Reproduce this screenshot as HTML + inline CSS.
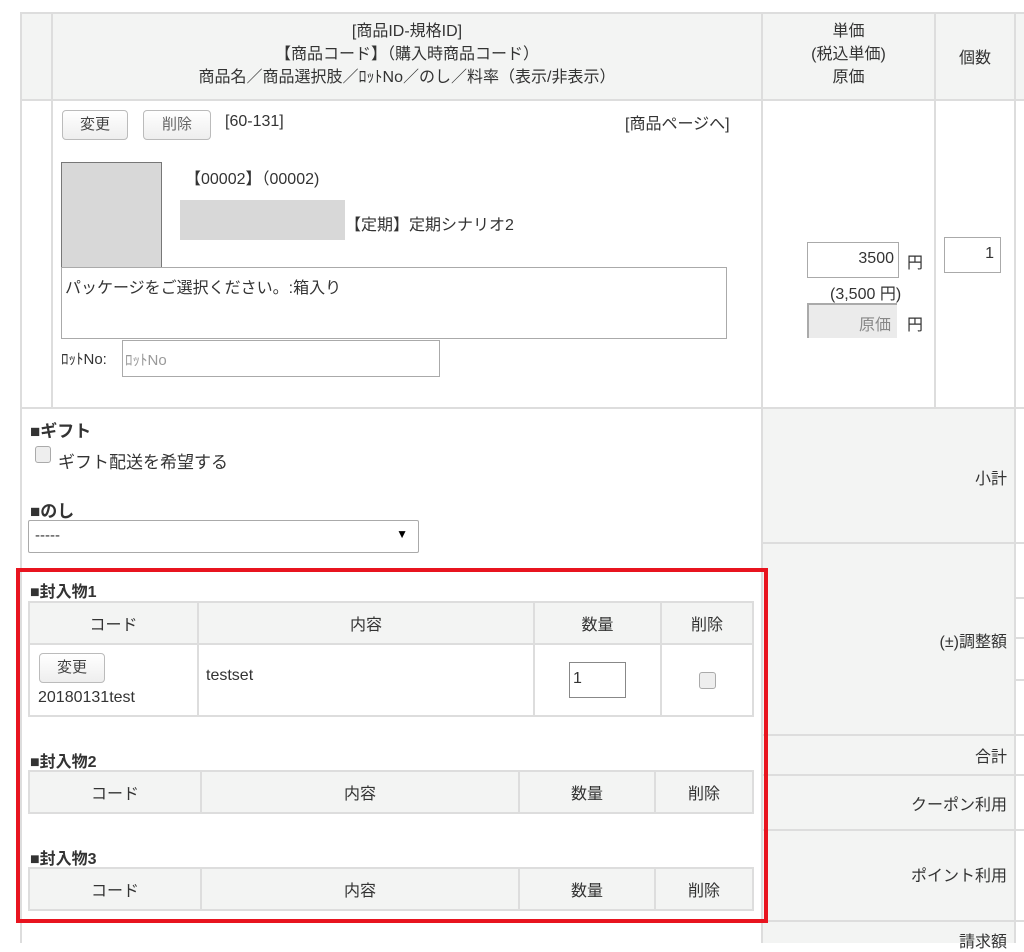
<!DOCTYPE html>
<html><head><meta charset="utf-8"><style>
*{box-sizing:border-box;margin:0;padding:0}
body{width:1024px;height:943px;background:#fff;position:relative;overflow:hidden;font-family:"Liberation Sans","Noto Sans CJK JP",sans-serif;font-size:16px;color:#333}
.a{position:absolute}
.hl{position:absolute;height:2px;background:#ddd}
.vl{position:absolute;width:2px;background:#ddd}
.g{background:#f3f4f3}
.btn{position:absolute;border:1px solid #bbb;border-radius:4px;background:linear-gradient(#fff,#eee);font-size:15px;text-align:center;color:#444}
.inp{position:absolute;border:1px solid #aaa;background:#fff}
.sub{position:absolute;border-collapse:collapse;font-size:16px}
.sub td{border:2px solid #ddd;text-align:center}
.sub tr.h td{background:#f3f4f3;height:42px}
</style></head><body>
<div class="a g" style="left:20px;top:13px;width:1004px;height:88px"></div>
<div class="hl" style="left:20px;top:12px;width:1004px"></div>
<div class="hl" style="left:20px;top:99px;width:1004px"></div>
<div class="hl" style="left:20px;top:407px;width:1004px"></div>
<div class="vl" style="left:20px;top:12px;height:931px"></div>
<div class="vl" style="left:51px;top:12px;height:396px"></div>
<div class="vl" style="left:761px;top:12px;height:931px"></div>
<div class="vl" style="left:934px;top:12px;height:396px"></div>
<div class="vl" style="left:1014px;top:12px;height:931px"></div>
<div class="a" style="left:52px;top:20px;width:710px;text-align:center;line-height:23px">[商品ID-規格ID]<br>【商品コード】（購入時商品コード）<br>商品名／商品選択肢／ﾛｯﾄNo／のし／料率（表示/非表示）</div>
<div class="a" style="left:762px;top:20px;width:173px;text-align:center;line-height:23px">単価<br>(税込単価)<br>原価</div>
<div class="a" style="left:935px;top:44px;width:80px;text-align:center">個数</div>
<div class="btn" style="left:62px;top:110px;width:66px;height:30px;line-height:28px">変更</div>
<div class="btn" style="left:143px;top:110px;width:68px;height:30px;line-height:28px;color:#666">削除</div>
<div class="a" style="left:225px;top:113px">[60-131]</div>
<div class="a" style="left:625px;top:110px">[商品ページへ]</div>
<div class="a" style="left:61px;top:162px;width:101px;height:106px;background:#d8d8d8;border:1px solid #777"></div>
<div class="a" style="left:185px;top:165px">【00002】（00002)</div>
<div class="a" style="left:180px;top:200px;width:165px;height:40px;background:#d8d8d8"></div>
<div class="a" style="left:345px;top:211px">【定期】定期シナリオ2</div>
<div class="inp" style="left:61px;top:267px;width:666px;height:72px;padding:6px 3px">パッケージをご選択ください。:箱入り</div>
<div class="a" style="left:61px;top:348px;font-size:15px">ﾛｯﾄNo:</div>
<div class="inp" style="left:122px;top:340px;width:318px;height:37px;color:#999;font-size:15px;padding:8px 2px">ﾛｯﾄNo</div>
<div class="inp" style="left:807px;top:242px;width:92px;height:36px;text-align:right;padding:7px 4px">3500</div>
<div class="a" style="left:907px;top:249px">円</div>
<div class="a" style="left:830px;top:280px">(3,500 円)</div>
<div class="a" style="left:807px;top:303px;width:90px;height:35px;background:#ebebeb;border-top:2px solid #aaa;border-left:2px solid #aaa;text-align:right;padding:6px 6px;color:#888">原価</div>
<div class="a" style="left:907px;top:311px">円</div>
<div class="inp" style="left:944px;top:237px;width:57px;height:36px;text-align:right;padding:7px 6px">1</div>
<div class="a g" style="left:763px;top:409px;width:251px;height:534px"></div>
<div class="hl" style="left:762px;top:542px;width:262px"></div>
<div class="hl" style="left:1014px;top:597px;width:10px"></div>
<div class="hl" style="left:1014px;top:637px;width:10px"></div>
<div class="hl" style="left:1014px;top:679px;width:10px"></div>
<div class="hl" style="left:762px;top:734px;width:262px"></div>
<div class="hl" style="left:762px;top:774px;width:262px"></div>
<div class="hl" style="left:762px;top:829px;width:262px"></div>
<div class="hl" style="left:762px;top:920px;width:262px"></div>
<div class="a" style="right:17px;top:465px">小計</div>
<div class="a" style="right:17px;top:628px">(±)調整額</div>
<div class="a" style="right:17px;top:743px">合計</div>
<div class="a" style="right:17px;top:791px">クーポン利用</div>
<div class="a" style="right:17px;top:862px">ポイント利用</div>
<div class="a" style="right:17px;top:928px">請求額</div>
<div class="a" style="left:30px;top:417px;font-weight:bold;font-size:17px">■ギフト</div>
<div class="a" style="left:35px;top:446px;width:16px;height:17px;border:1px solid #aaa;border-radius:3px;background:#eee"></div>
<div class="a" style="left:58px;top:448px;font-size:17px">ギフト配送を希望する</div>
<div class="a" style="left:30px;top:497px;font-weight:bold;font-size:17px">■のし</div>
<div class="a" style="left:28px;top:520px;width:391px;height:33px;border:1px solid #aaa;border-radius:2px;padding:6px 6px;font-size:15px">-----<span style="position:absolute;right:10px;top:6px;font-size:12px;color:#000">▼</span></div>
<div class="a" style="left:16px;top:568px;width:752px;height:355px;border:4px solid #e8141f"></div>
<div class="a" style="left:30px;top:578px;font-weight:bold">■封入物1</div>
<table class="sub" style="left:28px;top:601px;width:726px">
<tr class="h"><td style="width:169px">コード</td><td style="width:336px">内容</td><td style="width:127px">数量</td><td>削除</td></tr>
<tr><td style="height:72px;text-align:left;position:relative"><div class="btn" style="left:9px;top:8px;width:66px;height:30px;line-height:28px">変更</div><div style="padding:36px 0 0 8px">20180131test</div></td><td style="text-align:left;padding:0 7px 8px">testset</td><td><div style="margin:0 auto;width:57px;height:36px;border:1px solid #888;text-align:left;padding:7px 3px">1</div></td><td><div style="margin:0 auto;width:17px;height:17px;border:1px solid #aaa;border-radius:3px;background:#eee"></div></td></tr>
</table>
<div class="a" style="left:30px;top:748px;font-weight:bold">■封入物2</div>
<table class="sub" style="left:28px;top:770px;width:726px">
<tr class="h"><td style="width:172px">コード</td><td style="width:318px">内容</td><td style="width:136px">数量</td><td>削除</td></tr></table>
<div class="a" style="left:30px;top:845px;font-weight:bold">■封入物3</div>
<table class="sub" style="left:28px;top:867px;width:726px">
<tr class="h"><td style="width:172px">コード</td><td style="width:318px">内容</td><td style="width:136px">数量</td><td>削除</td></tr></table>
</body></html>
